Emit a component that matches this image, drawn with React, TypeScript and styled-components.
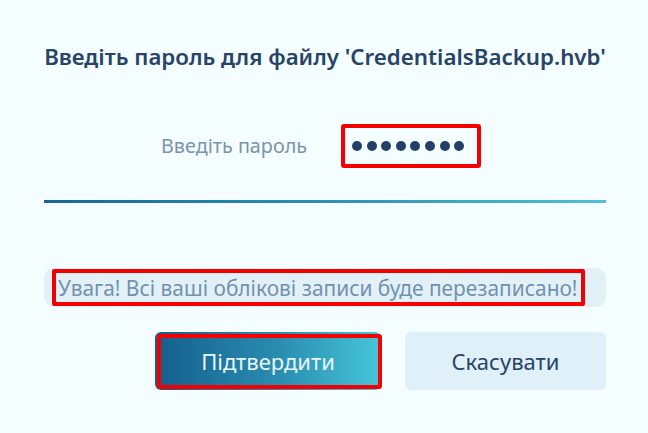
import React from "react";
import styled, { createGlobalStyle } from "styled-components";

const Global = createGlobalStyle`
  html, body { margin: 0; padding: 0; background: #f4fdff; }
  body { font-family: "Noto Sans", "Open Sans", sans-serif; }
`;

const Page = styled.div`
  width: 648px;
  height: 433px;
  box-sizing: border-box;
  padding: 0 42px 0 44px;
  display: flex;
  flex-direction: column;
  background: #f4fdff;
`;

const Title = styled.h1`
  margin: 44px 0 0;
  font-size: 22.3px;
  font-weight: 600;
  color: #274468;
  text-align: center;
  line-height: 26px;
  white-space: nowrap;
`;

const PasswordRow = styled.div`
  margin-top: 54px;
  display: flex;
  align-items: center;
  justify-content: center;
  gap: 34px;
  padding-right: 8px;
`;

const Label = styled.span`
  font-size: 19.8px;
  color: #7b93ab;
  line-height: 24px;
`;

const PasswordBox = styled.div`
  width: 140px;
  height: 44px;
  box-sizing: border-box;
  border: 4px solid #f40000;
  border-radius: 3px;
  display: flex;
  align-items: center;
  padding-left: 7px;
  gap: 4.6px;
`;

const Dot = styled.span`
  width: 10px;
  height: 10px;
  border-radius: 50%;
  background: #234168;
`;

const Divider = styled.div`
  margin-top: 32px;
  height: 3px;
  background: linear-gradient(90deg, #186793 0%, #2f8fb0 50%, #4ec0d4 100%);
`;

const Warning = styled.div`
  margin-top: 65px;
  height: 39px;
  box-sizing: border-box;
  border-radius: 10px;
  background: #e2f1f8;
  display: flex;
  align-items: center;
  padding-left: 8px;
`;

const Highlight = styled.span`
  height: 37px;
  box-sizing: border-box;
  border: 4px solid #f40000;
  border-radius: 2px;
  display: flex;
  align-items: center;
  padding: 0 3px 0 2px;
  font-size: 20.9px;
  color: #7391ad;
  white-space: nowrap;
`;

const Buttons = styled.div`
  margin-top: 25px;
  display: flex;
  justify-content: flex-end;
  gap: 24px;
`;

const Button = styled.button<{ $primary?: boolean }>`
  position: relative;
  width: ${(p) => (p.$primary ? 226 : 201)}px;
  height: 58px;
  border: none;
  border-radius: 6px;
  font-family: "Noto Sans", "Open Sans", sans-serif;
  font-size: 22px;
  cursor: pointer;
  color: ${(p) => (p.$primary ? "#e8f6fb" : "#274468")};
  background: ${(p) =>
    p.$primary
      ? "linear-gradient(90deg, #145f8d 0%, #2a8db0 55%, #46c6d9 100%)"
      : "#e0f0f8"};
  ${(p) =>
    p.$primary &&
    `
    &::after {
      content: "";
      position: absolute;
      top: 2px;
      left: 2px;
      right: -1px;
      bottom: 1px;
      border: 4px solid #f40000;
      border-radius: 3px;
    }
  `}
`;

export default function App() {
  return (
    <>
      <Global />
      <Page>
        <Title>Введіть пароль для файлу 'CredentialsBackup.hvb'</Title>
        <PasswordRow>
          <Label>Введіть пароль</Label>
          <PasswordBox>
            {Array.from({ length: 8 }).map((_, i) => (
              <Dot key={i} />
            ))}
          </PasswordBox>
        </PasswordRow>
        <Divider />
        <Warning>
          <Highlight>Увага! Всі ваші облікові записи буде перезаписано!</Highlight>
        </Warning>
        <Buttons>
          <Button $primary>Підтвердити</Button>
          <Button>Скасувати</Button>
        </Buttons>
      </Page>
    </>
  );
}
